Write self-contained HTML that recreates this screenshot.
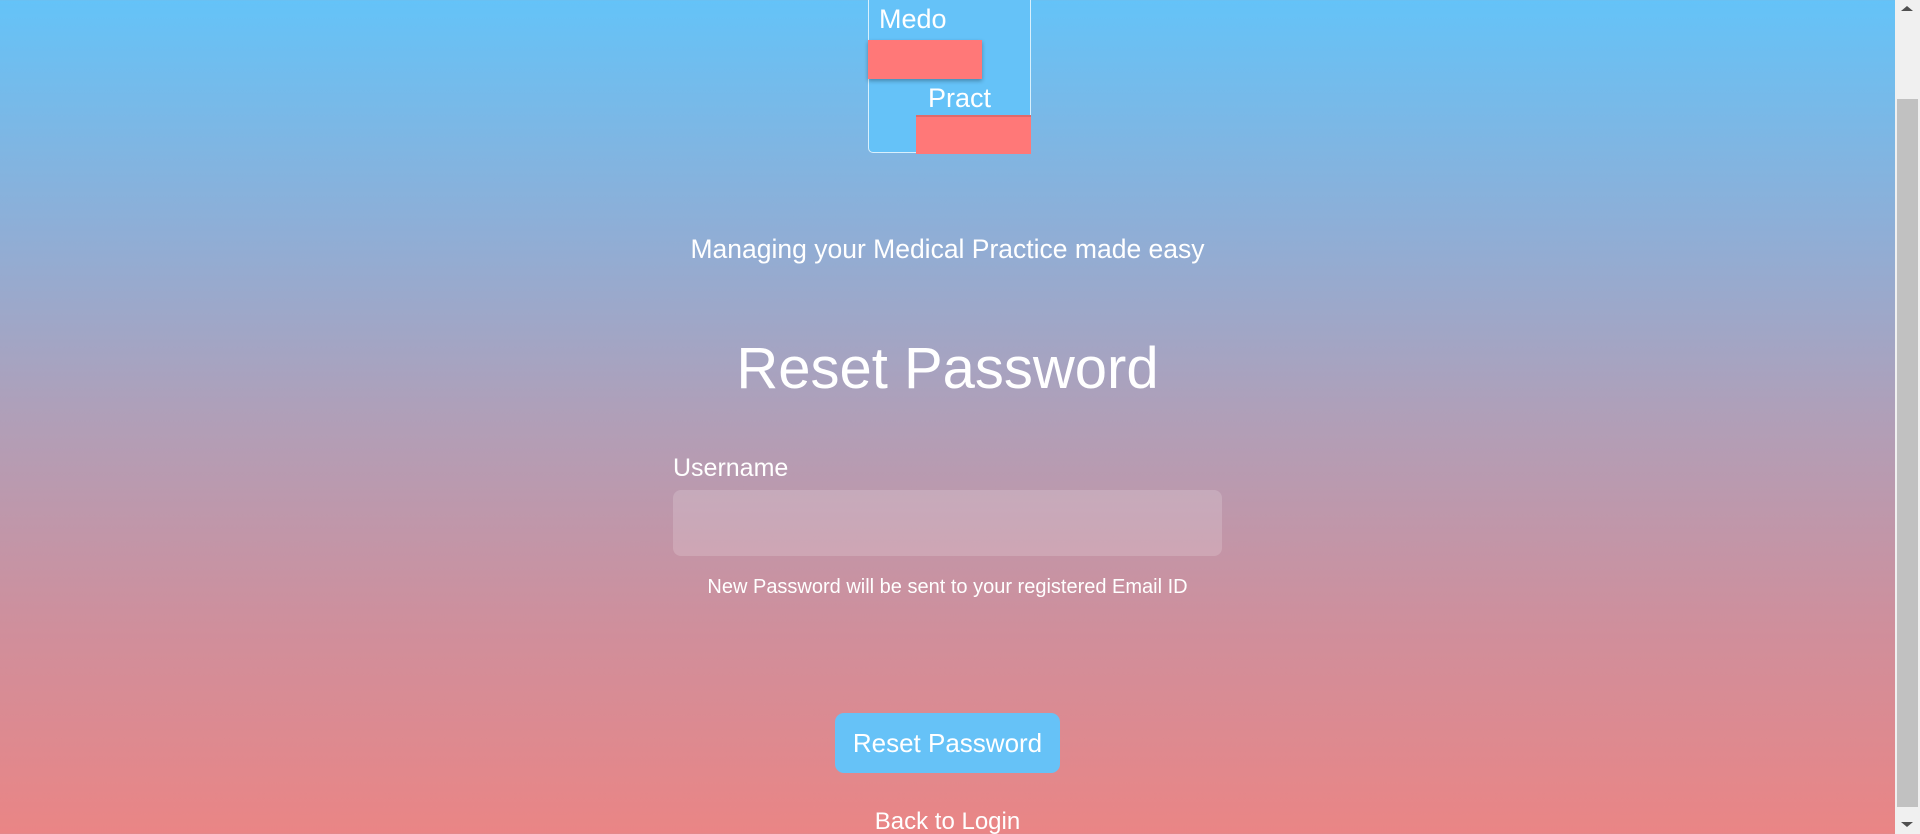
<!DOCTYPE html>
<html><head><meta charset="utf-8"><style>
html,body{margin:0;padding:0;width:1920px;height:834px;overflow:hidden;}
body{font-family:"Liberation Sans",sans-serif;color:#fff;position:relative;
background:linear-gradient(to bottom,#64c3f8 0%,#8faed6 28%,#b09fb8 50%,#cf8f9c 75%,#ea8585 100%);}
.abs{position:absolute;}
.logo{left:868px;top:-4px;width:163px;height:157px;border:1.5px solid rgba(255,255,255,0.75);border-radius:0 0 5px 5px;background:#65c2f8;box-sizing:border-box;}
.red{background:#ff7878;box-shadow:0 2px 4px rgba(0,0,0,0.3);}
.c{left:0;width:1895px;text-align:center;white-space:nowrap;}
.sb{left:1895px;top:0;width:25px;height:834px;background:#f0f0f0;}
</style></head><body>
<div class="abs logo"></div>
<div class="abs" style="left:879px;top:4px;font-size:27px;">Medo</div>
<div class="abs red" style="left:868px;top:40px;width:114px;height:39px;"></div>
<div class="abs" style="left:928px;top:83px;font-size:27px;">Pract</div>
<div class="abs red" style="left:916px;top:115px;width:115px;height:39px;box-shadow:none;border-top:2px solid #e06a6a;box-sizing:border-box;"></div>

<div class="abs c" style="top:234px;font-size:26.5px;">Managing your Medical Practice made easy</div>
<div class="abs c" style="top:335px;font-size:58px;">Reset Password</div>
<div class="abs" style="left:673px;top:454px;font-size:25px;">Username</div>
<div class="abs" style="left:673px;top:490px;width:549px;height:66px;border-radius:8px;background:rgba(255,255,255,0.17);"></div>
<div class="abs c" style="top:576px;font-size:20px;">New Password will be sent to your registered Email ID</div>
<div class="abs" style="left:835px;top:713px;width:225px;height:60px;border-radius:9px;background:#66c2f7;font-size:26px;line-height:60px;text-align:center;">Reset Password</div>
<div class="abs c" style="top:808px;font-size:24px;">Back to Login</div>

<div class="abs sb">
<div class="abs" style="left:6px;top:6px;width:0;height:0;border-left:6px solid transparent;border-right:6px solid transparent;border-bottom:5px solid #505050;"></div>
<div class="abs" style="left:2px;top:99px;width:21px;height:708px;background:#c1c1c1;"></div>
<div class="abs" style="left:6px;top:822px;width:0;height:0;border-left:6px solid transparent;border-right:6px solid transparent;border-top:5px solid #505050;"></div>
</div>
</body></html>
